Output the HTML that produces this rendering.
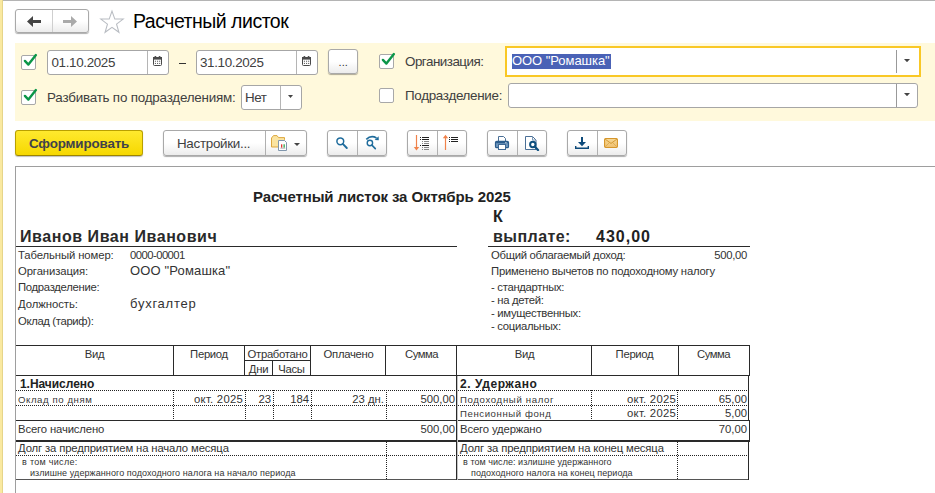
<!DOCTYPE html>
<html><head><meta charset="utf-8">
<style>
*{box-sizing:border-box;margin:0;padding:0}
html,body{width:935px;height:493px;overflow:hidden;background:#fff}
body{font-family:"Liberation Sans",sans-serif;font-size:13px;color:#333;position:relative}
.abs{position:absolute}
#topline{left:0;top:0;width:935px;height:1px;background:#b4b4b4}
#leftstrip{left:0;top:0;width:3px;box-sizing:border-box;height:493px;background:#fae9a0;border-right:1px solid #e6d58a}
.btn{position:absolute;border:1px solid #a9a9a9;border-radius:3px;background:linear-gradient(#fff,#fff 50%,#ececec);box-shadow:0 1px 1px rgba(0,0,0,.32)}
.sep{position:absolute;top:0;bottom:0;width:1px;background:#b0b0b0}
#title{left:133px;top:10px;font-size:19.5px;letter-spacing:-0.5px;color:#000;white-space:nowrap}
#panel{left:15px;top:43px;width:920px;height:78px;background:#fff9dc}
.cb{position:absolute;width:15px;height:15px;border:1px solid #a8a8a8;border-radius:2px;background:#fff}
.inp{position:absolute;border:1px solid #a6a6a6;border-radius:3px;background:#fff}
.t{position:absolute;white-space:nowrap;color:#404040;font-size:13.4px;letter-spacing:-0.15px;margin-top:1px}
#report{left:15px;top:166px;width:925px;height:330px;border:1px solid #9e9e9e;background:#fff}

.hl{position:absolute;height:1px;background:#2a2a2a}
.vl{position:absolute;width:1px;background:#2a2a2a}
.hd{position:absolute;height:1px;background:repeating-linear-gradient(90deg,#222 0 1px,transparent 1px 2px)}
.vd{position:absolute;width:1px;background:repeating-linear-gradient(180deg,#222 0 1px,transparent 1px 2px)}
.r{position:absolute;white-space:nowrap;color:#333;font-size:11.3px;letter-spacing:-0.3px;line-height:14px}
.rr{text-align:right}
.c{text-align:center}
.sm{font-size:9.6px;letter-spacing:0.58px;color:#383838}
.s9{font-size:9px;letter-spacing:0.05px}
</style></head><body>
<svg width="0" height="0" style="position:absolute"><defs><g id="cal"><rect x="0.5" y="1.5" width="8" height="8" rx="1" fill="#fff" stroke="#4a4a4a"/><rect x="0" y="1" width="9" height="2.6" fill="#4a4a4a"/><rect x="1.6" y="0" width="1.6" height="2" rx=".6" fill="#4a4a4a"/><rect x="5.8" y="0" width="1.6" height="2" rx=".6" fill="#4a4a4a"/><g fill="#666"><rect x="1.9" y="4.7" width="1.1" height="1.1"/><rect x="4" y="4.7" width="1.1" height="1.1"/><rect x="6.1" y="4.7" width="1.1" height="1.1"/><rect x="1.9" y="6.9" width="1.1" height="1.1"/><rect x="4" y="6.9" width="1.1" height="1.1"/><rect x="6.1" y="6.9" width="1.1" height="1.1"/></g></g></defs></svg>
<div id="topline" class="abs"></div>
<div id="leftstrip" class="abs"></div>

<!-- nav buttons -->
<div class="btn" style="left:15px;top:9px;width:74px;height:24px"><div class="sep" style="left:36px;background:#cfcfcf"></div>
<svg class="abs" style="left:10px;top:5px" width="16" height="13" viewBox="0 0 16 13"><path d="M1 6.5 L7 1 V5 H15 V8 H7 V12 Z" fill="#444"/></svg>
<svg class="abs" style="left:46px;top:5px" width="16" height="13" viewBox="0 0 16 13"><path d="M15 6.5 L9 1 V5 H1 V8 H9 V12 Z" fill="#aaa"/></svg>
</div>
<svg class="abs" style="left:98.5px;top:8.5px" width="26" height="26" viewBox="0 0 24 24"><path d="M12 2 L14.6 9.3 H22.3 L16.2 14 L18.4 21.5 L12 17 L5.6 21.5 L7.8 14 L1.7 9.3 H9.4 Z" fill="#fff" stroke="#b8bcc2" stroke-width="1"/></svg>
<div id="title" class="abs">Расчетный листок</div>

<div id="panel" class="abs"></div>
<!-- row 1 -->
<div class="cb" style="left:21px;top:55px"><svg class="abs" style="left:-1px;top:-4px" width="18" height="16" viewBox="0 0 18 16"><path d="M3.9 8.9 L7.4 12.6 L14.9 3.1" fill="none" stroke="#0b9648" stroke-width="2.4" stroke-linecap="round" stroke-linejoin="round"/></svg></div>
<div class="inp" style="left:47px;top:50px;width:122px;height:25px"><div class="sep" style="left:99px;background:#b5b5b5"></div>
<span class="t" style="left:3.5px;top:3px;letter-spacing:-0.35px">01.10.2025</span>
<svg class="abs cal" style="left:105px;top:5px" width="9" height="10" viewBox="0 0 9 10"><use href="#cal"/></svg></div>
<div class="abs" style="left:179px;top:63px;width:7px;height:1px;background:#333"></div>
<div class="inp" style="left:196px;top:50px;width:122px;height:25px"><div class="sep" style="left:99px;background:#b5b5b5"></div>
<span class="t" style="left:3px;top:3px;letter-spacing:-0.35px">31.10.2025</span>
<svg class="abs cal" style="left:105px;top:5px" width="9" height="10" viewBox="0 0 9 10"><use href="#cal"/></svg></div>
<div class="btn" style="left:328px;top:49px;width:30px;height:25px"><span class="t" style="left:9.5px;top:5px;font-size:11px;color:#333;letter-spacing:.1px">...</span></div>
<div class="cb" style="left:379px;top:54px"><svg class="abs" style="left:-1px;top:-4px" width="18" height="16" viewBox="0 0 18 16"><path d="M3.9 8.9 L7.4 12.6 L14.9 3.1" fill="none" stroke="#0b9648" stroke-width="2.4" stroke-linecap="round" stroke-linejoin="round"/></svg></div>
<span class="t" style="left:405px;top:53px;letter-spacing:-0.5px">Организация:</span>
<div class="inp" style="left:505px;top:46px;width:416px;height:31px;border:2px solid #f9c825;border-radius:0"><div class="sep" style="left:389px;top:2px;bottom:2px;background:#999"></div>
<span class="t" style="left:5px;top:3px;height:17px;line-height:17px;background:linear-gradient(#4a62b6,#4a62b6) no-repeat 0 2px/100% 15px;color:#fff;padding:0 1px 0 0;font-size:13px;letter-spacing:-0.05px">ООО "Ромашка"</span>
<svg class="abs" style="left:396.5px;top:10.5px" width="6" height="3.2" viewBox="0 0 7 4" preserveAspectRatio="none"><path d="M0 0 H7 L3.5 4 Z" fill="#444"/></svg></div>
<!-- row 2 -->
<div class="cb" style="left:21px;top:90px"><svg class="abs" style="left:-1px;top:-4px" width="18" height="16" viewBox="0 0 18 16"><path d="M3.9 8.9 L7.4 12.6 L14.9 3.1" fill="none" stroke="#0b9648" stroke-width="2.4" stroke-linecap="round" stroke-linejoin="round"/></svg></div>
<span class="t" style="left:47px;top:89px;letter-spacing:-0.2px">Разбивать по подразделениям:</span>
<div class="inp" style="left:241px;top:85px;width:61px;height:25px"><div class="sep" style="left:38px;background:#b5b5b5"></div>
<span class="t" style="left:3px;top:3px;letter-spacing:-0.4px">Нет</span>
<svg class="abs" style="left:46px;top:9px" width="5" height="3" viewBox="0 0 7 4"><path d="M0 0 H7 L3.5 4 Z" fill="#444"/></svg></div>
<div class="cb" style="left:379px;top:88px"></div>
<span class="t" style="left:405px;top:87px;letter-spacing:-0.3px">Подразделение:</span>
<div class="inp" style="left:508px;top:83px;width:410px;height:25px"><div class="sep" style="left:387px;background:#999"></div>
<svg class="abs" style="left:394.5px;top:9.3px" width="6" height="3.2" viewBox="0 0 7 4" preserveAspectRatio="none"><path d="M0 0 H7 L3.5 4 Z" fill="#444"/></svg></div>

<!-- toolbar -->
<div class="abs" id="go" style="left:15px;top:130px;width:128px;height:26px;border:1px solid #b9a000;border-bottom-color:#9c8400;border-radius:3px;background:linear-gradient(#ffe92e,#f6d800);box-shadow:0 1px 1px rgba(0,0,0,.25)"><span class="t" style="left:13px;top:4px;font-weight:bold;color:#40424a">Сформировать</span></div>
<div class="btn" style="left:163px;top:130px;width:144px;height:26px"><div class="sep" style="left:101px"></div>
<span class="t" style="left:13px;top:4px;letter-spacing:-0.3px">Настройки...</span>
<svg class="abs" style="left:107px;top:4px" width="17" height="17" viewBox="0 0 17 17"><path d="M0.5 3 L2.5 0.6 H6 L7.5 2.6 H13.5 V12 H0.5 Z" fill="#fbe4a0" stroke="#dca73f" stroke-width="1"/><path d="M1 5 H13.5" stroke="#fbe5a5" stroke-width="1.2"/><path d="M7.5 5.5 H13.5 L15.5 7.5 V15.5 H7.5 Z" fill="#fff" stroke="#8096ac" stroke-width="1"/><rect x="10" y="9.3" width="1.3" height="3.4" fill="#e53935"/><rect x="12.5" y="9.3" width="1.3" height="3.4" fill="#2eaa4e"/><rect x="9.3" y="12.8" width="5" height=".7" fill="#999"/></svg>
<svg class="abs" style="left:130px;top:12px" width="6" height="3" viewBox="0 0 6 3"><path d="M0 0 H6 L3 3 Z" fill="#444"/></svg></div>

<div class="btn" style="left:327px;top:130px;width:60px;height:26px"><div class="sep" style="left:29px"></div>
<svg class="abs" style="left:7px;top:4px" width="16" height="16" viewBox="0 0 16 16"><circle cx="5.3" cy="6.3" r="3.4" fill="none" stroke="#1f6c9c" stroke-width="1.5"/><path d="M7.8 8.9 L11.8 13" stroke="#1f6c9c" stroke-width="1.9" stroke-linecap="round"/></svg>
<svg class="abs" style="left:36px;top:3px" width="18" height="18" viewBox="0 0 18 18"><path d="M2.3 5.4 Q7 0.9 12.5 4" fill="none" stroke="#1f6c9c" stroke-width="1.7"/><path d="M10.6 5.9 L14.8 6.3 L14.6 2.2 Z" fill="#1f6c9c"/><circle cx="5.9" cy="9" r="2.7" fill="none" stroke="#1f6c9c" stroke-width="1.4"/><path d="M7.9 11.1 L11.3 14.6" stroke="#1f6c9c" stroke-width="1.6" stroke-linecap="round"/></svg></div>

<div class="btn" style="left:407px;top:130px;width:60px;height:26px"><div class="sep" style="left:29px"></div>
<svg class="abs" style="left:5px;top:3px" width="20" height="18" viewBox="0 0 20 18"><path d="M3.5 1 V14" stroke="#f0824a" stroke-width="1.2"/><path d="M0.8 13 H6.2 L3.5 16.5 Z" fill="#f0824a"/><g fill="#222"><rect x="7" y="3" width="1" height="1"/><rect x="9" y="3" width="7" height="1"/><rect x="7" y="5" width="1" height="1"/><rect x="9" y="5" width="7" height="1"/><rect x="7" y="11" width="1" height="1"/><rect x="9" y="11" width="7" height="1"/></g><g fill="#8a8a8a"><rect x="9" y="7" width="1" height="1"/><rect x="11" y="7" width="5" height="1"/><rect x="9" y="9" width="1" height="1"/><rect x="11" y="9" width="5" height="1"/><rect x="9" y="13" width="1" height="1"/><rect x="11" y="13" width="5" height="1"/><rect x="9" y="15" width="1" height="1"/><rect x="11" y="15" width="5" height="1"/></g></svg>
<svg class="abs" style="left:34px;top:3px" width="20" height="18" viewBox="0 0 20 18"><path d="M3.5 3 V16" stroke="#f0824a" stroke-width="1.2"/><path d="M0.8 4.2 H6.2 L3.5 0.8 Z" fill="#f0824a"/><g fill="#222"><rect x="7" y="3" width="1" height="1"/><rect x="9" y="3" width="7" height="1"/><rect x="7" y="5" width="1" height="1"/><rect x="9" y="5" width="7" height="1"/><rect x="7" y="7" width="1" height="1"/><rect x="9" y="7" width="7" height="1"/></g></svg></div>

<div class="btn" style="left:487px;top:130px;width:60px;height:26px"><div class="sep" style="left:29px"></div>
<svg class="abs" style="left:6px;top:4px" width="16" height="16" viewBox="0 0 16 16"><path d="M4.5 6.5 V1.5 H9.5 L11.5 3.5 V6.5" fill="#fff" stroke="#4a6f96" stroke-width="1"/><rect x="1.5" y="6.3" width="13" height="6.4" rx="1.3" fill="#6f97bd" stroke="#2b5c8c" stroke-width="1.2"/><rect x="2.2" y="7" width="11.6" height="1.2" fill="#2b5c8c"/><rect x="4.5" y="9.5" width="7" height="5" fill="#fff" stroke="#3d6894" stroke-width="1"/><rect x="11.3" y="7.2" width="1.2" height="1" fill="#fff"/></svg>
<svg class="abs" style="left:36px;top:4px" width="16" height="16" viewBox="0 0 16 16"><path d="M1.5 1.5 H8.5 L12 5 V14.5 H1.5 Z" fill="#fff" stroke="#4a6f96" stroke-width="1"/><path d="M8.5 1.5 V5 H12" fill="none" stroke="#7d9ab8" stroke-width="1"/><circle cx="8.8" cy="9.5" r="2.7" fill="#fff" stroke="#0d4f7e" stroke-width="2"/><path d="M10.9 11.8 L14 15" stroke="#0d4f7e" stroke-width="2.3" stroke-linecap="round"/></svg></div>

<div class="btn" style="left:567px;top:130px;width:60px;height:26px"><div class="sep" style="left:29px"></div>
<svg class="abs" style="left:6px;top:5px" width="16" height="14" viewBox="0 0 16 14"><rect x="7" y="1" width="2" height="6" fill="#0d4a7a"/><path d="M4 6 H12 L8 10.3 Z" fill="#0d4a7a"/><path d="M1.7 10 V12.3 H14.3 V10" fill="none" stroke="#0d4a7a" stroke-width="1.4"/></svg>
<svg class="abs" style="left:36px;top:7px" width="14" height="10" viewBox="0 0 15 11" preserveAspectRatio="none"><defs><linearGradient id="eg" x1="0" y1="0" x2="0" y2="1"><stop offset="0" stop-color="#f7d894"/><stop offset="1" stop-color="#f0c070"/></linearGradient></defs><rect x="0.6" y="0.6" width="13.8" height="9.8" rx="1.2" fill="url(#eg)" stroke="#d6962b" stroke-width="1.2"/><path d="M1.2 1.2 L7.5 6 L13.8 1.2" fill="none" stroke="#cf932c" stroke-width="1"/><path d="M1.2 9.8 L5.6 5.2 M13.8 9.8 L9.4 5.2" stroke="#dba84c" stroke-width=".9"/></svg></div>

<div id="report" class="abs"></div>
<!-- report text -->
<div class="r" style="left:253px;top:188px;font-size:15px;font-weight:bold;letter-spacing:-0.1px;line-height:17px;color:#222">Расчетный листок за Октябрь 2025</div>
<div class="r" style="left:20px;top:227px;font-size:16px;font-weight:bold;letter-spacing:0.55px;line-height:20px;color:#2a2a2a">Иванов Иван Иванович</div>
<div class="r" style="left:493px;top:207px;font-size:16px;font-weight:bold;letter-spacing:0.3px;line-height:20px;color:#222">К</div>
<div class="r" style="left:493px;top:227px;font-size:16px;font-weight:bold;letter-spacing:0.45px;line-height:20px;color:#2a2a2a">выплате:</div>
<div class="r" style="left:596px;top:227px;font-size:16px;font-weight:bold;letter-spacing:1px;line-height:20px;color:#222">430,00</div>
<div class="hl" style="left:16px;top:246px;width:441px"></div>
<div class="hl" style="left:488px;top:246px;width:262px"></div>

<div class="r" style="left:18px;top:248px;letter-spacing:-0.1px">Табельный номер:</div>
<div class="r" style="left:130px;top:248px;letter-spacing:-0.55px">0000-00001</div>
<div class="r" style="left:18px;top:264px;letter-spacing:-0.1px">Организация:</div>
<div class="r" style="left:130px;top:263px;font-size:13px;letter-spacing:0.15px;line-height:16px">ООО "Ромашка"</div>
<div class="r" style="left:18px;top:280px">Подразделение:</div>
<div class="r" style="left:18px;top:297px;letter-spacing:-0.05px">Должность:</div>
<div class="r" style="left:130px;top:296px;font-size:13px;letter-spacing:0.75px;line-height:16px">бухгалтер</div>
<div class="r" style="left:18px;top:314px;letter-spacing:-0.35px">Оклад (тариф):</div>

<div class="r" style="left:491px;top:248px">Общий облагаемый доход:</div>
<div class="r rr" style="left:647px;width:100px;top:248px">500,00</div>
<div class="r" style="left:491px;top:264px;letter-spacing:-0.22px">Применено вычетов по подоходному налогу</div>
<div class="r" style="left:491px;top:280px">- стандартных:</div>
<div class="r" style="left:491px;top:293px">- на детей:</div>
<div class="r" style="left:491px;top:306px">- имущественных:</div>
<div class="r" style="left:491px;top:319px">- социальных:</div>

<!-- table lines -->
<div class="hl" style="left:16px;top:345px;width:734px"></div>
<div class="hl" style="left:244px;top:360px;width:67px"></div>
<div class="hl" style="left:16px;top:375px;width:734px"></div>
<div class="hd" style="left:16px;top:390px;width:733px"></div>
<div class="hd" style="left:16px;top:405px;width:733px"></div>
<div class="hl" style="left:16px;top:420px;width:734px"></div>
<div class="hl" style="left:16px;top:440px;width:734px;height:2px"></div>
<div class="hd" style="left:16px;top:455px;width:733px"></div>
<div class="hl" style="left:16px;top:479px;width:733px;background:#555"></div>
<div class="vl" style="left:173px;top:345px;height:30px"></div>
<div class="vl" style="left:244px;top:345px;height:30px"></div>
<div class="vl" style="left:272px;top:360px;height:15px"></div>
<div class="vl" style="left:310px;top:345px;height:30px"></div>
<div class="vl" style="left:385px;top:345px;height:30px"></div>
<div class="vl" style="left:456px;top:345px;height:135px"></div><div class="vl" style="left:457px;top:376px;height:104px;background:#c4c4c4"></div>
<div class="vl" style="left:591px;top:345px;height:30px"></div>
<div class="vl" style="left:678px;top:345px;height:30px"></div>
<div class="vl" style="left:749px;top:345px;height:30px"></div>
<div class="vl" style="left:748px;top:375px;height:45px"></div><div class="vl" style="left:748px;top:442px;height:38px"></div>
<div class="vl" style="left:749px;top:420px;height:22px"></div>
<div class="vd" style="left:173px;top:390px;height:30px"></div>
<div class="vd" style="left:245px;top:390px;height:30px"></div>
<div class="vd" style="left:273px;top:390px;height:30px"></div>
<div class="vd" style="left:311px;top:390px;height:30px"></div>
<div class="vd" style="left:386px;top:390px;height:30px"></div>
<div class="vd" style="left:591px;top:390px;height:30px"></div>
<div class="vd" style="left:677px;top:390px;height:30px"></div>
<div class="vd" style="left:386px;top:442px;height:37px"></div>
<div class="vd" style="left:677px;top:442px;height:37px"></div>

<!-- table text -->
<div class="r c" style="left:16px;width:157px;top:347px">Вид</div>
<div class="r c" style="left:174px;width:70px;top:347px">Период</div>
<div class="r c" style="left:245px;width:65px;top:347px">Отработано</div>
<div class="r c" style="left:245px;width:27px;top:362px">Дни</div>
<div class="r c" style="left:273px;width:37px;top:362px">Часы</div>
<div class="r c" style="left:311px;width:75px;top:347px">Оплачено</div>
<div class="r c" style="left:387px;width:69px;top:347px;letter-spacing:-0.5px">Сумма</div>
<div class="r c" style="left:458px;width:133px;top:347px">Вид</div>
<div class="r c" style="left:592px;width:85px;top:347px">Период</div>
<div class="r c" style="left:678px;width:71px;top:347px;letter-spacing:-0.5px">Сумма</div>

<div class="r" style="left:20px;top:377px;font-size:12px;font-weight:bold;letter-spacing:-0.05px;color:#222">1.Начислено</div>
<div class="r" style="left:460px;top:377px;font-size:12px;font-weight:bold;letter-spacing:0.55px;color:#222">2. Удержано</div>

<div class="r sm" style="left:18px;top:393px">Оклад по дням</div>
<div class="r rr" style="left:174px;width:69px;top:392px"><span style="letter-spacing:0.25px">окт. 2025</span></div>
<div class="r rr" style="left:245px;width:26px;top:392px"><span style="letter-spacing:0">23</span></div>
<div class="r rr" style="left:273px;width:36px;top:392px"><span style="letter-spacing:0">184</span></div>
<div class="r rr" style="left:311px;width:73px;top:392px"><span style="letter-spacing:0">23 дн.</span></div>
<div class="r rr" style="left:387px;width:68px;top:392px"><span style="letter-spacing:0">500,00</span></div>
<div class="r sm" style="left:460px;top:393px;letter-spacing:0.66px">Подоходный налог</div>
<div class="r rr" style="left:592px;width:84px;top:392px"><span style="letter-spacing:0.25px">окт. 2025</span></div>
<div class="r rr" style="left:678px;width:69px;top:392px"><span style="letter-spacing:0">65,00</span></div>
<div class="r sm" style="left:460px;top:407px">Пенсионный фонд</div>
<div class="r rr" style="left:592px;width:84px;top:406px"><span style="letter-spacing:0.25px">окт. 2025</span></div>
<div class="r rr" style="left:678px;width:69px;top:406px"><span style="letter-spacing:0">5,00</span></div>

<div class="r" style="left:18px;top:422px;letter-spacing:-0.14px">Всего начислено</div>
<div class="r rr" style="left:387px;width:68px;top:422px"><span style="letter-spacing:0">500,00</span></div>
<div class="r" style="left:460px;top:422px;letter-spacing:-0.14px">Всего удержано</div>
<div class="r rr" style="left:678px;width:69px;top:422px"><span style="letter-spacing:0">70,00</span></div>

<div class="r" style="left:18px;top:441px;letter-spacing:-0.13px">Долг за предприятием на начало месяца</div>
<div class="r" style="left:460px;top:441px;letter-spacing:-0.13px">Долг за предприятием на конец месяца</div>
<div class="r s9" style="left:22px;top:455px;letter-spacing:0.3px">в том числе:</div>
<div class="r s9" style="left:30px;top:466px;letter-spacing:0.09px">излишне удержанного подоходного налога на начало периода</div>
<div class="r s9" style="left:463px;top:455px">в том числе: излишне удержанного</div>
<div class="r s9" style="left:471px;top:466px">подоходного налога на конец периода</div>
</body></html>
